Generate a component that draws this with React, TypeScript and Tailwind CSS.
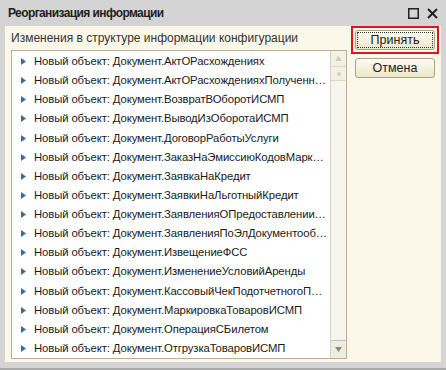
const items: string[] = [
  "Новый объект: Документ.АктОРасхождениях",
  "Новый объект: Документ.АктОРасхожденияхПолученн…",
  "Новый объект: Документ.ВозвратВОборотИСМП",
  "Новый объект: Документ.ВыводИзОборотаИСМП",
  "Новый объект: Документ.ДоговорРаботыУслуги",
  "Новый объект: Документ.ЗаказНаЭмиссиюКодовМарк…",
  "Новый объект: Документ.ЗаявкаНаКредит",
  "Новый объект: Документ.ЗаявкиНаЛьготныйКредит",
  "Новый объект: Документ.ЗаявленияОПредоставлении…",
  "Новый объект: Документ.ЗаявленияПоЭлДокументооб…",
  "Новый объект: Документ.ИзвещениеФСС",
  "Новый объект: Документ.ИзменениеУсловийАренды",
  "Новый объект: Документ.КассовыйЧекПодотчетногоП…",
  "Новый объект: Документ.МаркировкаТоваровИСМП",
  "Новый объект: Документ.ОперацияСБилетом",
  "Новый объект: Документ.ОтгрузкаТоваровИСМП",
]

function Arrow() {
  return (
    <svg width="5" height="7" viewBox="0 0 5 7" className="shrink-0">
      <path d="M0 0 L5 3.5 L0 7 Z" fill="#3f6a9c" />
    </svg>
  )
}

export default function App() {
  return (
    <div className="w-[446px] h-[370px] bg-[#d4d4d4] flex flex-col border-b-2 border-[#a9a9a9]" style={{ fontFamily: '"Liberation Sans", Arial, sans-serif' }}>
      {/* title bar */}
      <div className="h-[26px] flex items-center justify-between pl-[8px] pr-[8px] shrink-0">
        <span className="text-[12px] font-bold tracking-[-0.6px] text-[#1e1e1e]">
          Реорганизация информации
        </span>
        <div className="flex items-center gap-[8px]">
          <svg width="11" height="11" viewBox="0 0 11 11">
            <rect x="0.75" y="0.75" width="9.5" height="9.5" fill="none" stroke="#222" strokeWidth="1.5" />
          </svg>
          <svg width="11" height="11" viewBox="0 0 11 11">
            <path d="M1 1 L10 10 M10 1 L1 10" stroke="#222" strokeWidth="2" />
          </svg>
        </div>
      </div>

      {/* body */}
      <div className="flex-1 mx-[5px] mb-[6px] bg-[#fbf8e9] flex min-h-0">
        <div className="flex flex-col pl-[6px] w-[342px] pb-[3px]">
          <div className="h-[24px] flex items-center text-[12px] text-[#333]">
            Изменения в структуре информации конфигурации
          </div>
          <div className="flex-1 flex border border-[#b7b192] bg-white min-h-0">
            <div className="flex-1 flex flex-col pt-[1px] overflow-hidden min-w-0">
              {items.map((t) => (
                <div key={t} className="h-[19.2px] flex items-center gap-[8px] pl-[9px] pr-[2px] text-[11.3px] tracking-[-0.1px] text-[#1a1a1a] whitespace-nowrap">
                  <Arrow />
                  <span>{t}</span>
                </div>
              ))}
            </div>
            {/* scrollbar */}
            <div className="w-[16px] shrink-0 border-l border-[#d5d0b8] bg-[#f7f5ed] flex flex-col">
              <div className="h-[16px] flex items-center justify-center border-b border-[#ddd8c4] bg-[#f4f1e4]">
                <svg width="7" height="5" viewBox="0 0 7 5"><path d="M0 5 L3.5 0 L7 5 Z" fill="#d0ccbc" /></svg>
              </div>
              <div className="h-[14px] flex items-center justify-center border-b border-[#ddd8c4] bg-[#f4f1e4]">
                <div className="w-[4px] h-[4px] rounded-full bg-[#d5d1c2]" />
              </div>
              <div className="flex-1" />
              <div className="h-[18px] flex items-center justify-center border-t border-[#c9c4ad] bg-[#efece0]">
                <svg width="7" height="5" viewBox="0 0 7 5"><path d="M0 0 L3.5 5 L7 0 Z" fill="#8d8a80" /></svg>
              </div>
            </div>
          </div>
        </div>

        {/* buttons */}
        <div className="flex flex-col pl-[4px] gap-[4px]">
          <div className="border-2 border-[#e0141c] p-[2px] w-[88px] h-[28px]">
            <button className="w-full h-full rounded-[3px] border border-[#a9a283] bg-gradient-to-b from-[#fdfcf5] to-[#ece6c8] text-[12.5px] text-[#222] flex items-center justify-center">
              <span className="border border-dotted border-[#333] w-[76px] h-[16px] flex items-center justify-center">Принять</span>
            </button>
          </div>
          <div className="px-[4px]">
            <button className="w-[80px] h-[20px] rounded-[3px] border border-[#a9a283] bg-gradient-to-b from-[#fdfcf5] to-[#ece6c8] text-[12.5px] text-[#222] flex items-center justify-center">
              Отмена
            </button>
          </div>
        </div>
      </div>
    </div>
  )
}
